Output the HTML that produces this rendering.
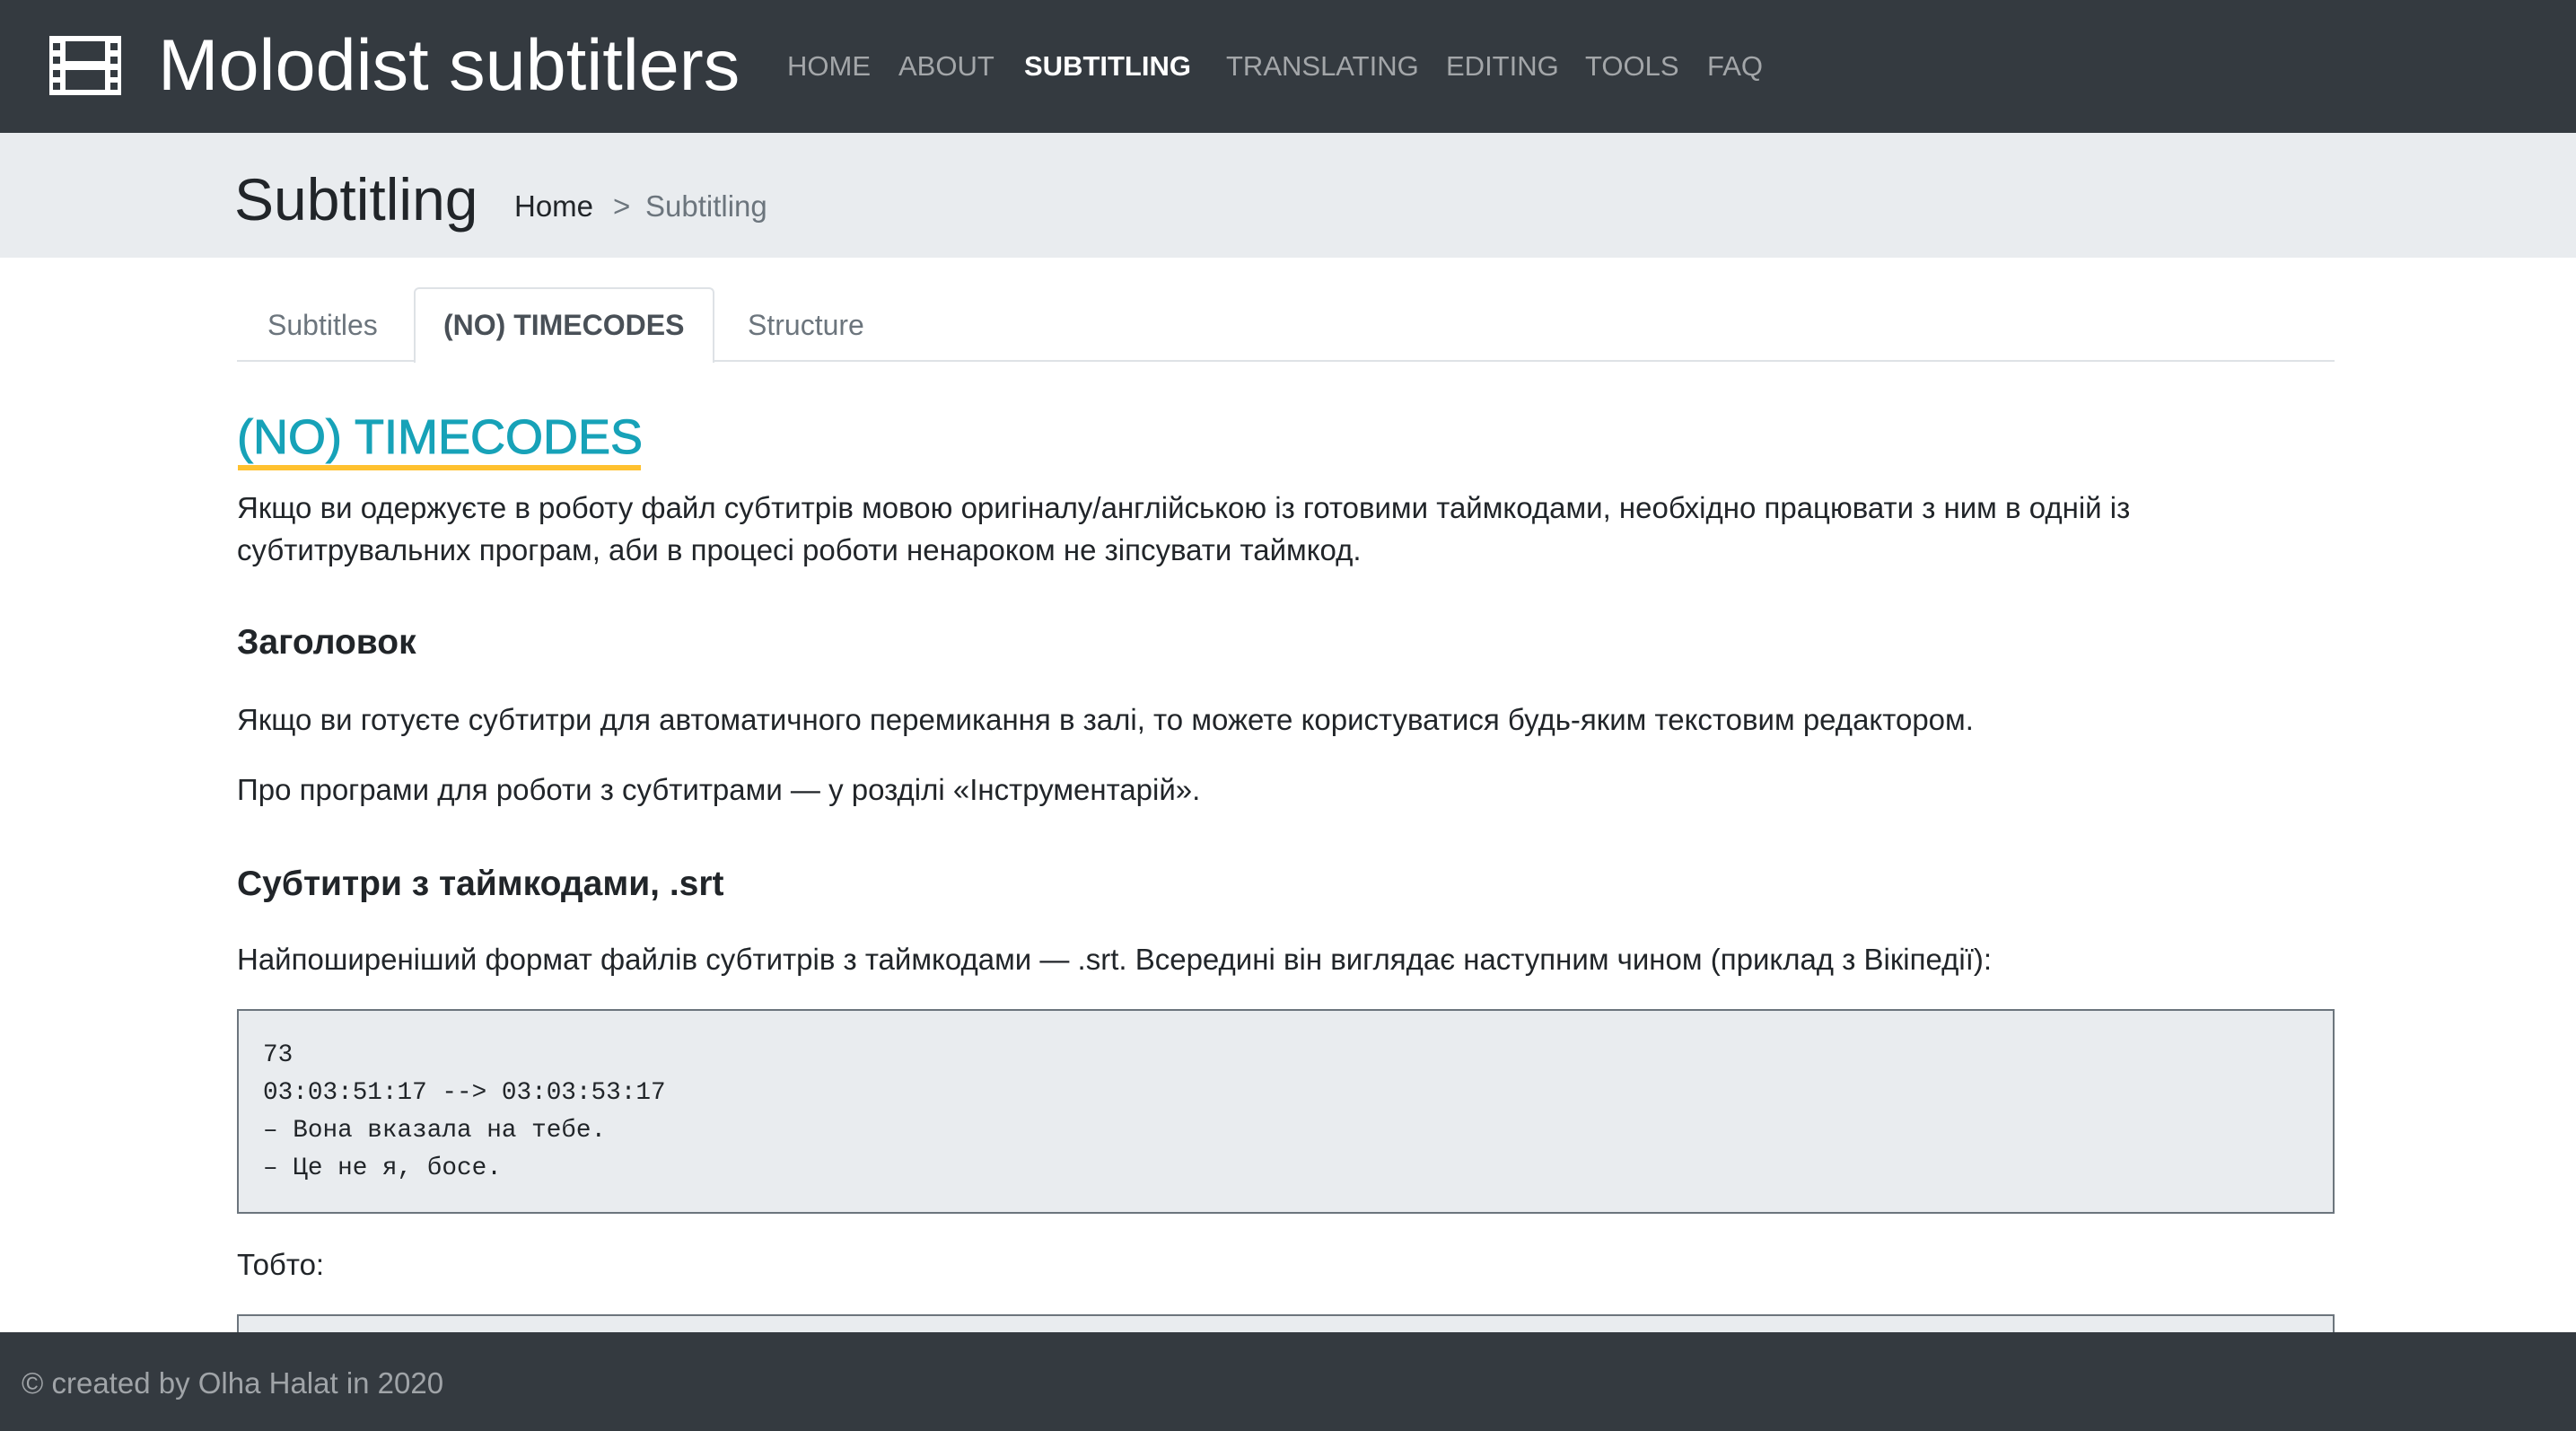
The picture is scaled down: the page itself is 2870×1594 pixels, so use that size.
<!DOCTYPE html>
<html><head><meta charset="utf-8"><style>
*{margin:0;padding:0;box-sizing:border-box}
body{width:2870px;height:1594px;overflow:hidden;background:#fff;font-family:"Liberation Sans","DejaVu Sans",sans-serif;color:#212529;position:relative}
.a{position:absolute;white-space:nowrap}
#hdr{position:absolute;left:0;top:0;width:2870px;height:148px;background:#343a40}
.nav{position:absolute;top:56px;font-size:31px;line-height:36px;color:rgba(255,255,255,.55)}
#bc{position:absolute;left:0;top:148px;width:2870px;height:139px;background:#e9ecef}
.p{font-size:33px;line-height:48px;color:#212529}
.h{font-size:39px;line-height:48px;font-weight:bold;color:#212529}
pre.a{white-space:pre;font-family:"Liberation Mono","DejaVu Sans Mono",monospace;font-size:27.7px;line-height:42px;color:#212529}
</style></head><body>
<div id="hdr">
<svg class="a" style="left:55px;top:40px" width="80" height="66" viewBox="0 0 80 66">
<rect x="0" y="0" width="80" height="66" fill="#fff"/>
<rect x="18" y="6" width="44" height="22" fill="#343a40"/>
<rect x="18" y="38" width="44" height="22" fill="#343a40"/>
<rect x="4" y="8" width="8" height="8" fill="#343a40"/>
<rect x="4" y="23" width="8" height="8" fill="#343a40"/>
<rect x="4" y="38" width="8" height="8" fill="#343a40"/>
<rect x="4" y="52" width="8" height="8" fill="#343a40"/>
<rect x="68" y="8" width="8" height="8" fill="#343a40"/>
<rect x="68" y="23" width="8" height="8" fill="#343a40"/>
<rect x="68" y="38" width="8" height="8" fill="#343a40"/>
<rect x="68" y="52" width="8" height="8" fill="#343a40"/>
</svg>
<div class="a" style="left:176px;top:26px;font-size:81px;line-height:94px;color:#fff">Molodist subtitlers</div>
<div class="a nav" style="left:877px">HOME</div>
<div class="a nav" style="left:1001px">ABOUT</div>
<div class="a nav" style="left:1141px;color:#fff;font-weight:bold">SUBTITLING</div>
<div class="a nav" style="left:1366px">TRANSLATING</div>
<div class="a nav" style="left:1611px">EDITING</div>
<div class="a nav" style="left:1766px">TOOLS</div>
<div class="a nav" style="left:1902px">FAQ</div>
</div>
<div id="bc">
<div class="a" style="left:261px;top:34px;font-size:66px;line-height:80px;color:#212529">Subtitling</div>
<div class="a" style="left:573px;top:62px;font-size:33px;line-height:40px;color:#212529">Home</div>
<div class="a" style="left:683px;top:62px;font-size:33px;line-height:40px;color:#6c757d">&gt;</div>
<div class="a" style="left:719px;top:62px;font-size:33px;line-height:40px;color:#6c757d">Subtitling</div>
</div>
<div class="a" style="left:264px;top:401px;width:2337px;height:2px;background:#dee2e6"></div>
<div class="a" style="left:461px;top:320px;width:335px;height:84px;background:#fff;border:2px solid #dee2e6;border-bottom:none;border-radius:6px 6px 0 0"></div>
<div class="a" style="left:298px;top:342px;font-size:32px;line-height:40px;color:#6c757d">Subtitles</div>
<div class="a" style="left:494px;top:342px;font-size:32px;line-height:40px;color:#495057;font-weight:bold">(NO) TIMECODES</div>
<div class="a" style="left:833px;top:342px;font-size:32px;line-height:40px;color:#6c757d">Structure</div>
<div class="a" style="left:264px;top:454px;font-size:54px;line-height:66px;color:#17a2b8;-webkit-text-stroke:1px #17a2b8">(NO) TIMECODES</div>
<div class="a" style="left:265px;top:518px;width:449px;height:6px;background:#ffc12f"></div>
<div class="a p" style="left:264px;top:542px">Якщо ви одержуєте в роботу файл субтитрів мовою оригіналу/англійською із готовими таймкодами, необхідно працювати з ним в одній із</div>
<div class="a p" style="left:264px;top:589px">субтитрувальних програм, аби в процесі роботи ненароком не зіпсувати таймкод.</div>
<div class="a h" style="left:264px;top:692px">Заголовок</div>
<div class="a p" style="left:264px;top:778px">Якщо ви готуєте субтитри для автоматичного перемикання в залі, то можете користуватися будь-яким текстовим редактором.</div>
<div class="a p" style="left:264px;top:856px">Про програми для роботи з субтитрами — у розділі «Інструментарій».</div>
<div class="a h" style="left:264px;top:961px">Субтитри з таймкодами, .srt</div>
<div class="a p" style="left:264px;top:1045px">Найпоширеніший формат файлів субтитрів з таймкодами — .srt. Всередині він виглядає наступним чином (приклад з Вікіпедії):</div>
<div class="a" style="left:264px;top:1124px;width:2337px;height:228px;background:#e9ecef;border:2px solid #6c757d"></div>
<pre class="a" style="left:293px;top:1155px">73
03:03:51:17 --&gt; 03:03:53:17
– Вона вказала на тебе.
– Це не я, босе.</pre>
<div class="a p" style="left:264px;top:1385px">Тобто:</div>
<div class="a" style="left:264px;top:1464px;width:2337px;height:60px;background:#e9ecef;border:2px solid #6c757d"></div>
<div class="a" style="left:0;top:1484px;width:2870px;height:110px;background:#343a40"></div>
<div class="a" style="left:24px;top:1521px;font-size:33px;line-height:40px;color:#a0a4a8">© created by Olha Halat in 2020</div>
</body></html>
